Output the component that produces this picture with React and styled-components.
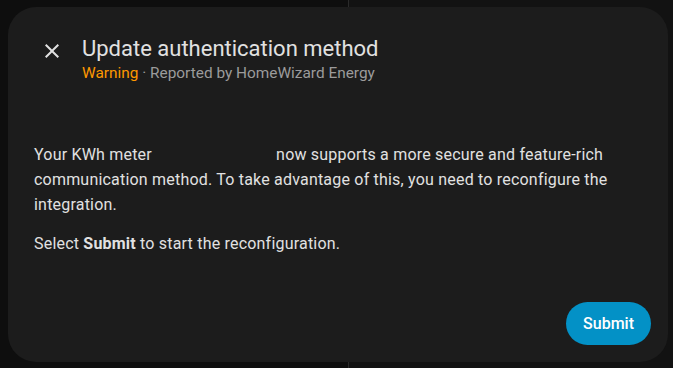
import styled, { createGlobalStyle } from 'styled-components';

const Global = createGlobalStyle`
  html, body {
    margin: 0;
    padding: 0;
    background: #111111;
    font-family: Roboto, "Noto Sans", sans-serif;
    -webkit-font-smoothing: antialiased;
  }
`

// fondo de la app detras del dialogo
const Page = styled.div`
  width: 673px;
  height: 368px;
  box-sizing: border-box;
  padding: 7px 5px 6px 8px;
  display: flex;
  background: linear-gradient(to right, #0e0e0e 0, #0e0e0e 348px, #2a2a2a 348px, #2a2a2a 349px, #121212 349px);
`

const Dialog = styled.div`
  flex: 1;
  background: #1c1c1c;
  border-radius: 28px;
  display: flex;
  flex-direction: column;
  color: #e1e1e1;
`

const Header = styled.div`
  display: flex;
  align-items: flex-start;
  padding: 27px 24px 0 32px;
  gap: 18px;
`

const CloseBtn = styled.button`
  width: 24px;
  height: 24px;
  padding: 0;
  margin-top: 5px;
  border: none;
  background: transparent;
  color: #e1e1e1;
  display: flex;
  align-items: center;
  justify-content: center;
`

const Titles = styled.div`
  display: flex;
  flex-direction: column;
`

const Title = styled.h2`
  margin: 0;
  font-size: 22px;
  font-weight: 400;
  line-height: 30px;
  color: #e1e1e1;
`

const Sub = styled.div`
  font-size: 15.4px;
  line-height: 19px;
  color: #9b9b9b;
`

const Warn = styled.span`
  color: #ff9800;
`

const Body = styled.div`
  padding: 59px 24px 0 26px;
  flex: 1;
`

const P = styled.p`
  margin: 0 0 14px;
  font-size: 16px;
  line-height: 25px;
  letter-spacing: 0.2px;
  color: #e1e1e1;
`

// nombre del dispositivo oculto en la captura
const Device = styled.span`
  margin-right: ${p => p.w}px;
`

const Footer = styled.div`
  display: flex;
  justify-content: flex-end;
  padding: 0 17px 17px 0;
`

const Submit = styled.button`
  height: 43px;
  padding: 0 17px;
  border: none;
  border-radius: 22px;
  background: #0391c6;
  color: #ffffff;
  font-family: Roboto, sans-serif;
  font-size: 16px;
  font-weight: 500;
`

function CloseIcon() {
  return (
    <svg width="24" height="24" viewBox="0 0 24 24">
      <path fill="currentColor" d="M19,6.41L17.59,5L12,10.59L6.41,5L5,6.41L10.59,12L5,17.59L6.41,19L12,13.41L17.59,19L19,17.59L13.41,12L19,6.41Z" />
    </svg>
  )
}

export default function App() {
  return (
    <>
      <Global />
      <Page>
        <Dialog>
          <Header>
            <CloseBtn><CloseIcon /></CloseBtn>
            <Titles>
              <Title>Update authentication method</Title>
              <Sub><Warn>Warning</Warn> · Reported by HomeWizard Energy</Sub>
            </Titles>
          </Header>
          <Body>
            <P><Device w={120}>Your KWh meter</Device> now supports a more secure and feature-rich communication method. To take advantage of this, you need to reconfigure the integration.</P>
            <P>Select <b>Submit</b> to start the reconfiguration.</P>
          </Body>
          <Footer>
            <Submit>Submit</Submit>
          </Footer>
        </Dialog>
      </Page>
    </>
  )
}
